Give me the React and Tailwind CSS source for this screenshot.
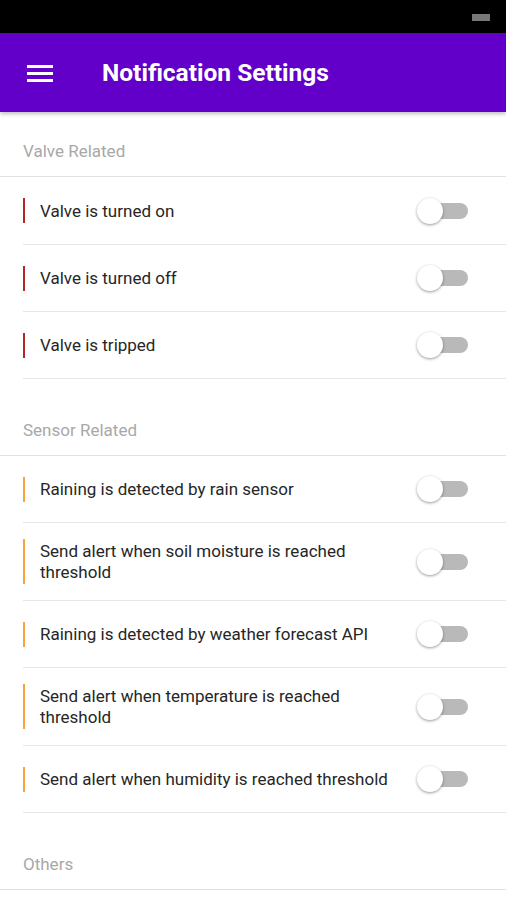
import React from "react";

const valve = ["Valve is turned on", "Valve is turned off", "Valve is tripped"];
const sensor = [
  "Raining is detected by rain sensor",
  "Send alert when soil moisture is reached threshold",
  "Raining is detected by weather forecast API",
  "Send alert when temperature is reached threshold",
  "Send alert when humidity is reached threshold",
];

function Toggle() {
  return (
    <div className="relative w-[51px] h-[28px] shrink-0 flex items-center">
      <div className="ml-[5px] w-[46px] h-[16px] rounded-full bg-[#b9b9b9]" />
      <div className="absolute left-0 top-[1px] w-[26px] h-[26px] rounded-full bg-white shadow-[0_1px_3px_rgba(0,0,0,0.4)]" />
    </div>
  );
}

function Row({ text, color, first }) {
  const two = text.length > 45;
  return (
    <div
      className={`ml-[23px] flex items-center border-b border-[#e6e6e6] ${
        two ? "h-[78px]" : first ? "h-[68px]" : "h-[67px]"
      }`}
    >
      <div className={`w-[2px] ${two ? "h-[45px]" : "h-[25px]"} ${color}`} />
      <div className="flex-1 pl-[15px] pr-[16px] pt-[1px] text-[17px] leading-[21px] text-[#262626]">{text}</div>
      <div className="mr-[38px]">
        <Toggle />
      </div>
    </div>
  );
}

function Header({ title, first }) {
  return (
    <div
      className={`${first ? "h-[65px]" : "h-[77px]"} flex items-end pb-[12px] pl-[23px] border-b border-[#e2e2e2] text-[17px] text-[#a8a8a8]`}
    >
      {title}
    </div>
  );
}

export default function App() {
  return (
    <div
      className="w-[506px] h-[900px] overflow-hidden bg-white"
      style={{ fontFamily: "Roboto, 'Noto Sans', sans-serif" }}
    >
      <div className="h-[33px] bg-black flex items-center justify-end pr-[16px]">
        <div className="w-[18px] h-[7px] bg-[#777] mt-[2px]" />
      </div>
      <div className="h-[79px] bg-[#6200c9] flex items-center shadow-[0_2px_4px_rgba(0,0,0,0.25)] relative z-10">
        <div className="ml-[27px] w-[26px] flex flex-col gap-[4px] mt-[1px]">
          <div className="h-[3px] bg-white" />
          <div className="h-[3px] bg-white" />
          <div className="h-[3px] bg-white" />
        </div>
        <div className="ml-[49px] mt-[2px] text-white font-bold text-[24.5px]">Notification Settings</div>
      </div>
      <Header title="Valve Related" first />
      {valve.map((t, i) => (
        <Row key={t} text={t} color="bg-[#b3262b]" first={i === 0} />
      ))}
      <Header title="Sensor Related" />
      {sensor.map((t) => (
        <Row key={t} text={t} color="bg-[#f5a33a]" />
      ))}
      <Header title="Others" />
    </div>
  );
}
